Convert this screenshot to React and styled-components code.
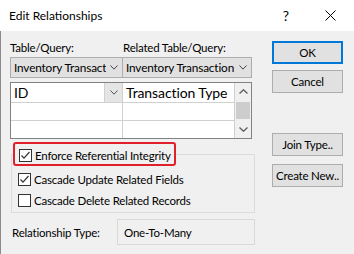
import React from 'react';
import styled, { createGlobalStyle } from 'styled-components';

const Global = createGlobalStyle`
  html, body { margin: 0; padding: 0; background: #f0f0f0; }
  body {
    font-family: Lato, "Noto Sans", "Liberation Sans", sans-serif;
    font-size: 11.5px;
    letter-spacing: -0.2px;
    color: #000;
  }
`;

const Window = styled.div`
  width: 354px;
  height: 254px;
  display: flex;
  flex-direction: column;
  background: #f0f0f0;
  overflow: hidden;
`;

const TitleBar = styled.div`
  height: 31px;
  flex: none;
  background: #fff;
  display: flex;
  align-items: center;
  padding-left: 9px;
`;

const Title = styled.div`
  font-size: 12px;
  letter-spacing: 0;
  flex: 1;
`;

const CaptionButton = styled.div`
  width: 44px;
  height: 31px;
  display: flex;
  align-items: center;
  justify-content: center;
  font-size: 14px;
  letter-spacing: 0;
  &:last-child { margin-right: 2px; }
`;

const Body = styled.div`
  flex: 1;
  display: flex;
  padding-top: 9px;
  border-left: 1px solid #8c8c8c;
`;

const LeftCol = styled.div`
  margin-left: 9px;
  width: 245px;
  display: flex;
  flex-direction: column;
`;

const RightCol = styled.div`
  margin-left: 17px;
  width: 71px;
  display: flex;
  flex-direction: column;
`;

const LabelRow = styled.div`
  display: flex;
  height: 16px;
  line-height: 16px;
`;

const Label = styled.div`
  width: ${p => p.$w || 'auto'};
`;

const ComboRow = styled.div`
  display: flex;
  margin-top: 1px;
`;

const Combo = styled.div`
  width: ${p => p.$w}px;
  height: 21px;
  box-sizing: border-box;
  margin-left: ${p => p.$ml || 0}px;
  background: #e1e1e1;
  border: 1px solid #adadad;
  display: flex;
  align-items: center;
  font-size: 11.8px;
  letter-spacing: -0.15px;
`;

const ComboText = styled.div`
  flex: 1;
  overflow: hidden;
  white-space: nowrap;
  padding-left: 3px;
`;

const ArrowBox = styled.div`
  width: ${p => p.$w || 16}px;
  flex: none;
  display: flex;
  align-items: center;
  justify-content: center;
  align-self: stretch;
`;

const Chevron = ({ up, color = '#444', w = 8, h = 5, sw = 1 }) => (
  <svg width={w} height={h} viewBox={`0 0 ${w} ${h}`}>
    <polyline
      points={up ? `0.5,${h - 0.5} ${w / 2},0.8 ${w - 0.5},${h - 0.5}` : `0.5,0.5 ${w / 2},${h - 0.8} ${w - 0.5},0.5`}
      fill="none"
      stroke={color}
      strokeWidth={sw}
    />
  </svg>
);

const Grid = styled.div`
  margin-top: 4px;
  width: 242px;
  height: 57px;
  box-sizing: border-box;
  border: 1px solid #828282;
  background: #fff;
  display: grid;
  grid-template-columns: 112px 112px 16px;
  grid-template-rows: 20px 18px 17px;
`;

const Cell = styled.div`
  border-right: 1px solid #d0d0d0;
  border-bottom: ${p => (p.$last ? 'none' : '1px solid #d0d0d0')};
  display: flex;
  align-items: center;
  font-size: 14px;
  letter-spacing: -0.1px;
  padding-left: ${p => (p.$head ? 2 : 0)}px;
  overflow: hidden;
  white-space: nowrap;
`;

const CellText = styled.div`
  flex: 1;
  padding-left: 1px;
`;

const CellDrop = styled.div`
  width: 17px;
  align-self: stretch;
  background: #e5e5e5;
  border-left: 1px solid #d0d0d0;
  display: flex;
  align-items: center;
  justify-content: center;
`;

const Scrollbar = styled.div`
  grid-column: 3;
  grid-row: 1 / span 3;
  background: #f0f0f0;
  display: flex;
  flex-direction: column;
`;

const ScrollArrow = styled.div`
  height: 17px;
  display: flex;
  align-items: center;
  justify-content: center;
`;

const ScrollTrack = styled.div`
  flex: 1;
  padding: 2px 1px 0;
`;

const Thumb = styled.div`
  height: 17px;
  background: #cdcdcd;
`;

const Group = styled.fieldset`
  margin: 3px 0 0 1px;
  padding: 0 0 0 1px;
  width: 244px;
  box-sizing: border-box;
  border: 1px solid #dcdcdc;
  height: 71px;
`;

const Legend = styled.legend`
  padding: 0;
  margin: 0;
`;

const Highlight = styled.div`
  width: 163px;
  height: 24px;
  box-sizing: border-box;
  border: 2px solid #e2202c;
  border-radius: 3px;
  display: flex;
  align-items: center;
  white-space: nowrap;
  padding: 3px 0 0 4px;
`;

const CheckRow = styled.div`
  display: flex;
  align-items: center;
  height: 21px;
  padding-left: 5px;
  white-space: nowrap;
  margin-top: ${p => p.$mt || 0}px;
`;

const Box = styled.div`
  width: 13px;
  height: 13px;
  box-sizing: border-box;
  border: 1px solid #333;
  background: #fff;
  flex: none;
  display: flex;
  align-items: center;
  justify-content: center;
  margin-right: 3px;
`;

const Check = ({ checked }) => (
  <Box>
    {checked && (
      <svg width="11" height="11" viewBox="0 0 11 11">
        <polyline points="1.5,5.5 4,8.2 9.5,2" fill="none" stroke="#333" strokeWidth="1.2" />
      </svg>
    )}
  </Box>
);

const TypeRow = styled.div`
  display: flex;
  align-items: center;
  margin-top: 6px;
  padding-left: 2px;
`;

const TypeLabel = styled.div`
  width: 105px;
`;

const TypeBox = styled.div`
  width: 138px;
  height: 26px;
  box-sizing: border-box;
  border: 1px solid #d9d9d9;
  display: flex;
  align-items: center;
  padding-left: 6px;
`;

const Button = styled.div`
  height: 23px;
  box-sizing: border-box;
  background: #e1e1e1;
  border: ${p => (p.$default ? '2px solid #0078d7' : '1px solid #adadad')};
  display: flex;
  align-items: center;
  justify-content: center;
  white-space: nowrap;
  margin-top: ${p => p.$mt || 0}px;
`;

export default function App() {
  return (
    <Window>
      <Global />
      <TitleBar>
        <Title>Edit Relationships</Title>
        <CaptionButton>?</CaptionButton>
        <CaptionButton>
          <svg width="11" height="11" viewBox="0 0 11 11">
            <path d="M0.5 0.5 L10.5 10.5 M10.5 0.5 L0.5 10.5" stroke="#000" strokeWidth="1" />
          </svg>
        </CaptionButton>
      </TitleBar>
      <Body>
        <LeftCol>
          <LabelRow>
            <Label $w="113px">Table/Query:</Label>
            <Label>Related Table/Query:</Label>
          </LabelRow>
          <ComboRow>
            <Combo $w={113}>
              <ComboText>Inventory Transactions</ComboText>
              <ArrowBox><Chevron /></ArrowBox>
            </Combo>
            <Combo $w={130} $ml={-1}>
              <ComboText>Inventory Transaction</ComboText>
              <ArrowBox><Chevron /></ArrowBox>
            </Combo>
          </ComboRow>
          <Grid>
            <Cell $head>
              <CellText>ID</CellText>
              <CellDrop><Chevron color="#555" /></CellDrop>
            </Cell>
            <Cell $head><CellText>Transaction Type</CellText></Cell>
            <Scrollbar>
              <ScrollArrow><Chevron up color="#606060" w={9} h={5} sw={1.4} /></ScrollArrow>
              <ScrollTrack><Thumb /></ScrollTrack>
              <ScrollArrow><Chevron color="#606060" w={9} h={5} sw={1.4} /></ScrollArrow>
            </Scrollbar>
            <Cell />
            <Cell />
            <Cell $last />
            <Cell $last />
          </Grid>
          <Group>
            <Legend>
              <Highlight>
                <Check checked />
                Enforce Referential Integrity
              </Highlight>
            </Legend>
            <CheckRow $mt={3}>
              <Check checked />
              Cascade Update Related Fields
            </CheckRow>
            <CheckRow>
              <Check />
              Cascade Delete Related Records
            </CheckRow>
          </Group>
          <TypeRow>
            <TypeLabel>Relationship Type:</TypeLabel>
            <TypeBox>One-To-Many</TypeBox>
          </TypeRow>
        </LeftCol>
        <RightCol>
          <Button $default $mt={1}>OK</Button>
          <Button $mt={6}>Cancel</Button>
          <Button $mt={40}>Join Type..</Button>
          <Button $mt={8}>Create New..</Button>
        </RightCol>
      </Body>
    </Window>
  );
}
